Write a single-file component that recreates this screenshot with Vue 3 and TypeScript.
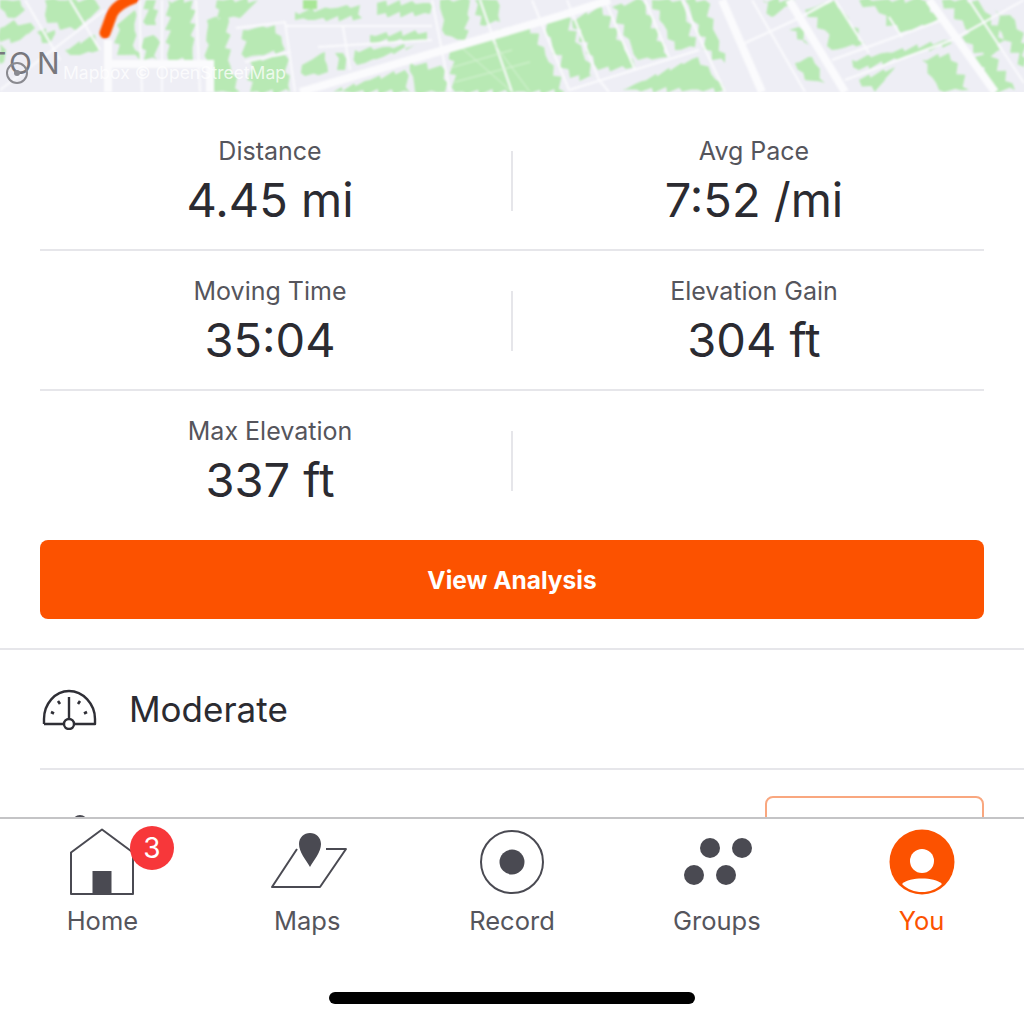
<script setup lang="ts">
const rows: { l: string; v: string }[][] = [
  [{ l: 'Distance', v: '4.45 mi' }, { l: 'Avg Pace', v: '7:52 /mi' }],
  [{ l: 'Moving Time', v: '35:04' }, { l: 'Elevation Gain', v: '304 ft' }],
  [{ l: 'Max Elevation', v: '337 ft' }, { l: '', v: '' }],
]
const tabs = [
  { key: 'home', label: 'Home' },
  { key: 'maps', label: 'Maps' },
  { key: 'record', label: 'Record' },
  { key: 'groups', label: 'Groups' },
  { key: 'you', label: 'You' },
]
const polys: number[][] = [
  [0,0,20,0,25,10,15,18,5,12,0,8],
  [45,0,95,0,100,8,90,18,75,30,60,30,45,15],
  [0,28,14,20,35,28,20,40,0,42],
  [37,32,55,30,50,43,42,43],
  [65,50,95,35,100,50,80,55,70,55],
  [0,44,6,50,4,62,0,64],
  [117,25,135,10,135,50,140,60,125,55,117,55],
  [146,0,156,0,156,25,146,25],
  [144,38,157,38,157,60,144,60],
  [168,0,193,0,193,60,168,60],
  [207,20,228,15,228,60,240,92,215,92,207,60],
  [217,0,258,0,240,18,217,18],
  [243,30,275,25,285,50,245,58],
  [250,62,285,55,290,92,250,92],
  [295,12,360,5,362,18,295,20],
  [377,3,430,3,430,14,377,15],
  [370,35,427,32,427,40,370,42],
  [302,65,325,52,328,72,305,76],
  [335,53,343,53,345,70,337,70],
  [355,50,415,45,365,63,357,65],
  [333,92,370,80,405,70,410,92],
  [410,62,445,70,445,92,415,92],
  [440,0,470,0,465,40,445,35],
  [475,0,497,0,500,22,480,25],
  [450,50,512,26,530,24,565,92,455,92],
  [542,20,565,15,595,78,570,78,552,45],
  [572,20,602,7,635,67,598,70],
  [612,7,642,0,668,57,638,60],
  [652,0,682,0,695,47,675,50],
  [622,90,698,57,725,90],
  [685,0,705,0,725,63,712,60],
  [762,0,795,0,772,17],
  [789,30,799,27,809,45],
  [795,63,812,57,825,83,805,80],
  [805,10,835,0,865,43,832,50,825,30],
  [859,0,922,0,942,20,899,33,879,13],
  [852,60,949,40,952,43,859,70],
  [859,80,895,67,875,92],
  [922,60,949,53,969,90,939,90],
  [942,0,978,0,1005,40,985,50],
  [962,37,985,25,1000,50,985,60],
  [995,10,1015,20,1024,33,1024,67,1002,33],
  [975,57,992,57,1015,90,992,90],
]
function jag(p: number[], i: number): string {
  let d = ''
  const n = p.length / 2
  for (let k = 0; k < n; k++) {
    const x0 = p[k * 2], y0 = p[k * 2 + 1]
    const x1 = p[((k + 1) % n) * 2], y1 = p[((k + 1) % n) * 2 + 1]
    const steps = Math.max(1, Math.round(Math.hypot(x1 - x0, y1 - y0) / 7))
    for (let s = 0; s < steps; s++) {
      const t = s / steps
      const o = s === 0 ? 0 : Math.sin((k + 1) * 12.9 + s * 78.2 + i * 3.7) * 3
      d += (d ? 'L' : 'M') + (x0 + (x1 - x0) * t + o).toFixed(1) + ' ' + (y0 + (y1 - y0) * t - o).toFixed(1)
    }
  }
  return d + 'Z'
}
const greens = polys.map(jag)
const bigRoads = [
  'M300 92L560 16L610 0',
  'M722 0L762 92',
  'M789 0L845 92',
  'M929 0L995 92',
  'M108 40V92',
  'M108 64H210V92',
]
const thinRoads = [
  'M0 90L105 10',
  'M25 0L60 60',
  'M70 0L100 50',
  'M140 0V30L142 92',
  'M162 0V92',
  'M196 0L200 92',
  'M236 28L285 22L295 92',
  'M285 26H432',
  'M343 27L350 70',
  'M245 62L290 52',
  'M318 47L432 40',
  'M432 0L450 92',
  'M480 0L512 92',
  'M532 0L569 90',
  'M567 0L599 80L609 92',
  'M605 0L635 70',
  'M645 0L669 57',
  'M682 0L725 92',
  'M569 90L699 50',
  'M752 0L805 92',
  'M745 43L795 20L832 0',
  'M832 60L942 20',
  'M835 0L869 53',
  'M845 80L952 40L1024 0',
  'M969 0L1024 83',
  'M889 17L902 37',
]
</script>

<template>
  <div class="page">
    <div class="content">
      <svg class="map" width="1024" height="92" viewBox="0 0 1024 92">
        <defs><filter id="soft"><feGaussianBlur stdDeviation="0.8" /></filter></defs>
        <rect width="1024" height="92" fill="#eeeef5" />
        <g filter="url(#soft)">
          <path v-for="(d, i) in greens" :key="i" :d="d" fill="#b8e9b4" />
          <path d="M303 0H317V9H303Z" fill="#a8e696" />
          <path v-for="d in thinRoads" :key="d" :d="d" fill="none" stroke="#fbfbfd" stroke-width="2" />
          <path d="M462 48L512 92M490 38L530 92M450 68L512 50M455 82L530 62" fill="none" stroke="#d9f3d6" stroke-width="1" />
          <path v-for="d in bigRoads" :key="d" :d="d" fill="none" stroke="#fbfbfd" stroke-width="8" />
          <path d="M134 -2C120 3 115 8 112 14L105 33" fill="none" stroke="#fc5200" stroke-width="11" stroke-linecap="round" />
        </g>
        <text y="74" class="place" x="-13 9 37">TON</text>
        <circle cx="17" cy="73" r="10" fill="none" stroke="#8a8a90" stroke-width="2" />
        <circle cx="17" cy="73" r="3" fill="#8a8a90" />
        <text x="63" y="79" class="attr">Mapbox © OpenStreetMap</text>
      </svg>

      <section class="stats">
        <div v-for="(row, r) in rows" :key="r" class="row">
          <div class="cell">
            <div class="label">{{ row[0].l }}</div>
            <div class="value">{{ row[0].v }}</div>
          </div>
          <div class="vline"></div>
          <div class="cell">
            <div class="label">{{ row[1].l }}</div>
            <div class="value">{{ row[1].v }}</div>
          </div>
        </div>
      </section>

      <div class="cta-wrap">
        <button class="cta">View Analysis</button>
      </div>

      <div class="effort">
        <div class="effort-inner">
          <svg width="56" height="42" viewBox="0 0 56 42" class="gauge">
            <path d="M3 36V31C3 16 14 3 28 3S54 16 54 31V36H33M23 36H3" fill="none" stroke="#2f2f36" stroke-width="2.400" stroke-linejoin="round" />
            <path d="M28 9V31" stroke="#2f2f36" stroke-width="2.400" />
            <path d="M10 24l3 1.500M17 13l2 3M39 13l-2 3M46 24l-3 1.500" stroke="#2f2f36" stroke-width="2.600" />
            <circle cx="28" cy="36" r="5" fill="#fff" stroke="#2f2f36" stroke-width="2.400" />
          </svg>
          <span>Moderate</span>
        </div>
      </div>

      <div class="next">
        <svg width="50" height="8" viewBox="0 0 50 8" class="next-icon">
          <path d="M13 7H23" stroke="#4a4a52" stroke-width="2" />
          <circle cx="40" cy="10" r="7" fill="none" stroke="#4a4a52" stroke-width="2" />
        </svg>
        <div class="outline"></div>
      </div>
    </div>

    <nav class="tabbar">
      <div class="tabs">
        <div v-for="t in tabs" :key="t.key" class="tab" :class="{ active: t.key === 'you' }">
          <div class="icon" :class="'icon-' + t.key">
            <svg v-if="t.key === 'home'" width="66" height="68" viewBox="0 0 66 68">
              <path d="M33 1.500L2 24.500V66H64V24.500Z" fill="none" stroke="#4a4a52" stroke-width="2" stroke-linejoin="round" />
              <rect x="23.500" y="43" width="19" height="23" fill="#4a4a52" />
            </svg>
            <svg v-else-if="t.key === 'maps'" width="78" height="68" viewBox="0 0 78 68">
              <path d="M27 21L2 59H50L76 21H56" fill="none" stroke="#4a4a52" stroke-width="2" stroke-linejoin="round" />
              <path d="M40 39C36 32 29 24 29 16C29 9.500 34 5 40 5S51 9.500 51 16C51 24 44 32 40 39Z" fill="#4a4a52" />
            </svg>
            <svg v-else-if="t.key === 'record'" width="66" height="66" viewBox="0 0 66 66">
              <circle cx="33" cy="33" r="31" fill="none" stroke="#4a4a52" stroke-width="2" />
              <circle cx="33" cy="33" r="12.500" fill="#4a4a52" />
            </svg>
            <svg v-else-if="t.key === 'groups'" width="70" height="50" viewBox="0 0 70 50">
              <circle cx="26" cy="11" r="10" fill="#4a4a52" />
              <circle cx="58" cy="11" r="10" fill="#4a4a52" />
              <circle cx="10" cy="38" r="10" fill="#4a4a52" />
              <circle cx="42" cy="38" r="10" fill="#4a4a52" />
            </svg>
            <svg v-else width="66" height="66" viewBox="0 0 66 66">
              <circle cx="33" cy="33" r="32.500" fill="#fc5200" />
              <circle cx="33" cy="32" r="12" fill="#fff" />
              <path d="M13 55C17 51 25 49.500 33 49.500S49 51 53 55C47.500 60.500 40.500 63 33 63S18.500 60.500 13 55Z" fill="#fff" />
            </svg>
          </div>
          <span v-if="t.key === 'home'" class="badge">3</span>
          <div class="tab-label">{{ t.label }}</div>
        </div>
      </div>
      <div class="indicator"></div>
    </nav>
  </div>
</template>

<style>
html, body { margin: 0; background: #fff; }
</style>

<style scoped>
.page {
  width: 1024px;
  height: 1024px;
  overflow: hidden;
  background: #fff;
  display: flex;
  flex-direction: column;
  font-family: Inter, "Liberation Sans", sans-serif;
}
.content { height: 817px; overflow: hidden; flex: none; }
.map { display: block; }
.place { font: 30px Inter, sans-serif; fill: #77777d; }
.attr { font: 17.500px Inter, sans-serif; fill: #ffffff; fill-opacity: 0.75; }

.stats { padding: 19px 40px 0; }
.row {
  display: grid;
  grid-template-columns: 1fr 2px 1fr;
  column-gap: 11px;
  height: 140px;
  box-sizing: border-box;
  border-bottom: 2px solid #e6e6ea;
}
.row:last-child { border-bottom: none; height: 130px; }
.cell { text-align: center; padding-top: 25px; }
.label {
  font-size: 25px;
  line-height: 30px;
  height: 30px;
  color: #55555c;
}
.value {
  font-size: 47px;
  line-height: 60px;
  height: 60px;
  margin-top: 4px;
  color: #2b2b31;
}
.vline { background: #e6e6ea; height: 60px; margin-top: 40px; }

.cta-wrap { padding: 19px 40px 29px; border-bottom: 2px solid #e6e6ea; }
.cta {
  display: block;
  width: 100%;
  height: 79px;
  border: none;
  border-radius: 8px;
  background: #fc5200;
  color: #fff;
  font: 700 24.500px Inter, sans-serif;
}

.effort { padding-left: 40px; }
.effort-inner {
  height: 118px;
  border-bottom: 2px solid #e6e6ea;
  display: flex;
  align-items: center;
  font-size: 35px;
  color: #2b2b31;
}
.gauge { margin-left: 1px; margin-right: 32px; }

.next {
  display: flex;
  justify-content: space-between;
  align-items: flex-start;
  padding: 26px 40px 0;
}
.next-icon { margin-top: 17px; }
.outline {
  width: 215px;
  height: 60px;
  border: 2px solid #f9a77f;
  border-radius: 8px;
}

.tabbar { flex: 1; border-top: 2px solid #c4c4c6; background: #fff; }
.tabs { display: grid; grid-template-columns: repeat(5, 1fr); }
.tab { position: relative; text-align: center; padding-top: 8px; }
.icon { height: 70px; display: flex; align-items: center; justify-content: center; }
.icon svg { display: block; }
.icon-maps svg, .icon-groups svg { margin-left: 4px; }
.tab-label {
  margin-top: 8px;
  font-size: 25.500px;
  line-height: 32px;
  color: #55555c;
}
.tab.active .tab-label { color: #fc5200; }
.badge {
  position: absolute;
  left: 130px;
  top: 7px;
  width: 44px;
  height: 44px;
  border-radius: 50%;
  background: #f7373a;
  color: #fff;
  font-size: 28px;
  line-height: 44px;
  text-align: center;
}
.indicator {
  width: 366px;
  height: 12px;
  margin: 55px auto 0;
  border-radius: 6px;
  background: #000;
}
</style>
